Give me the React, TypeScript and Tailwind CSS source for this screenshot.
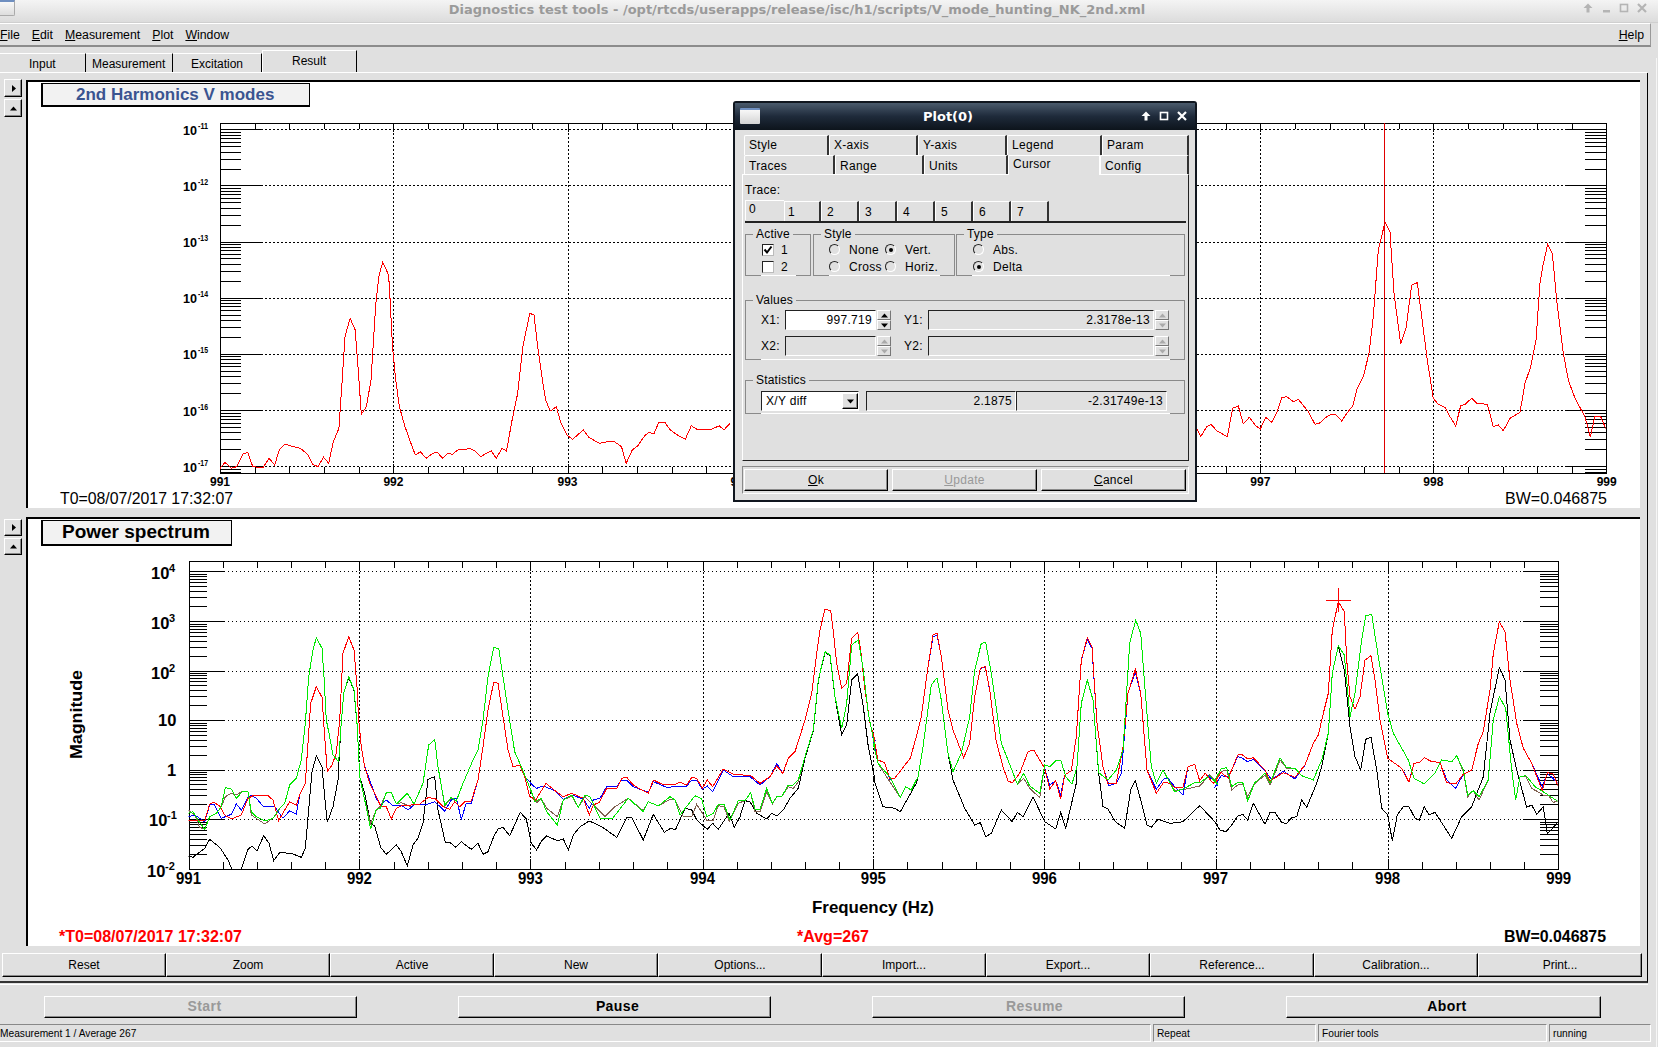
import React from "react";

const RED_A = "0,602 50,602 65,552 78,547 95,558 110,585 130,597 160,585 180,535 195,527 240,527 255,540 272,602 290,570 305,545 325,555 335,525 352,490 358,400 368,250 385,200 402,232 410,350 418,455 432,435 445,400 455,300 465,100 482,50 498,90 507,200 512,300 520,380 530,440 545,490 565,530 578,558 595,560 610,597 625,565 645,555 670,555 695,552 720,533 740,535 765,560 785,568 800,545 815,560 830,545 850,543 870,480 885,380 900,270 917,187 930,190 945,290 960,390 975,440 995,435 1010,470 1025,530 1035,535";
const BLUE_A = "0,590 20,585 50,605 65,555 78,552 100,595 130,583 145,552 160,570 180,532 190,525 205,535 225,558 260,560 285,595 305,572 325,582 335,525 352,490 358,400 368,250 385,200 402,232 410,350 418,455 432,435 445,400 455,300 465,100 482,50 498,90 507,200 512,300 520,380 530,440 545,480 565,535 578,555 595,540 612,555 640,555 660,570 680,553 700,553 720,552 740,545 770,573 790,540 805,535 820,597 835,550 850,550 870,480 885,380 900,270 917,187 930,190 945,290 960,390 975,440 995,435 1010,470 1035,495";
const GREEN_A = "0,580 15,575 30,600 50,628 65,590 85,580 100,560 112,503 130,507 145,535 165,513 180,515 190,575 205,590 230,603 255,595 275,565 290,550 305,495 325,475 340,420 352,310 362,170 375,90 385,53 402,85 408,170 415,300 423,340 435,405 452,425 458,330 467,220 482,170 498,210 508,320 515,470 530,540 548,627 565,568 578,565 595,518 610,518 625,552 658,520 678,552 705,490 722,375 740,358 750,440 770,555 790,532 805,543 825,490 855,420 870,390 885,300 900,170 917,83 932,85 945,170 960,270 980,395 1000,440 1020,490 1035,525";
const BROWN_A = "0,570 20,585 35,622 50,628 65,590 85,580 100,560 112,530 130,520 145,525 165,513 180,515 190,585 230,612 260,590 275,565 290,550 305,495 325,475 340,420 352,310 362,170 375,90 385,53 402,85 408,170 415,300 423,340 435,405 452,425 458,330 467,220 482,170 498,210 508,320 515,470 530,540 548,610 565,570 578,558 595,518 610,518 625,552 640,548 670,560 678,552 705,490 722,375 740,358 750,440 770,558 790,535 805,543 825,490 855,420 870,390 885,300 900,170 917,83 932,85 945,170 960,270 980,395 1000,440 1020,490 1035,525";
const BLACK_A = "0,708 15,712 50,685 65,658 95,682 120,720 132,748 145,775 160,748 180,688 192,678 207,693 227,647 243,670 257,722 275,698 310,700 340,712 352,685 372,455 385,408 402,440 410,530 418,607 435,560 450,480 458,330 467,220 482,172 498,212 508,320 515,470 530,520 548,610 560,618 578,682 595,703 625,675 640,695 658,738 675,675 690,655 705,610 720,478 740,470 750,570 772,667 785,667 803,682 820,665 850,688 870,670 885,703 900,695 917,650 930,627 945,622 965,647 997,577 1015,597 1030,670";

const RED_B = "6,590 15,603 48,550 75,572 100,590 125,580 160,595 178,645 190,615 208,607 230,565 260,565 275,535 290,532 310,555 335,570 355,580 370,540 395,552 430,555 450,547 470,555 485,532 500,535 517,565 532,540 548,560 580,507 610,522 640,525 660,525 690,550 720,530 740,497 758,520 775,475 795,455 825,360 845,280 860,160 870,90 885,27 902,33 910,95 920,190 935,265 950,250 965,115 983,97 992,150 1005,270 1020,370 1035,420";
const BLUE_B = "0,550 20,565 40,558 75,572 100,598 125,585 160,597 178,625 190,600 210,595 230,560 260,560 275,540 290,540 310,560 355,577 370,545 410,562 470,558 485,540 500,540 517,568 532,558 548,575 580,510 610,530 660,530 690,555 720,530 740,490 758,520 775,475 795,455 825,360 845,280 860,160 870,90 885,27 902,33 910,95 920,190 935,265 950,250 965,115 983,97 992,150 1005,270 1020,370 1035,420";
const GREEN_B = "0,565 15,605 33,595 50,635 82,675 100,600 125,585 145,622 165,585 180,590 210,655 248,655 275,620 295,595 340,635 355,605 385,618 420,590 435,600 450,645 495,587 515,597 530,650 550,640 565,613 582,613 600,660 625,602 645,602 662,578 675,627 690,627 710,565 727,610 740,590 755,590 775,555 790,555 805,540 825,470 850,390 865,240 885,155 900,165 915,290 935,385 950,310 965,135 985,120 1000,210 1015,340 1035,440";
const BROWN_B = "0,570 20,608 33,595 50,625 82,650 100,600 125,588 145,622 165,590 195,620 225,650 255,620 295,595 340,632 355,605 385,618 420,598 435,600 460,650 485,650 500,613 530,660 550,660 565,617 582,620 598,665 625,610 645,602 662,578 675,635 690,635 710,575 727,612 740,590 755,590 775,560 790,565 805,545 825,470 850,390 865,240 885,155 900,165 915,290 935,385 950,310 965,135 985,120 1000,210 1015,340 1035,440";
const BLACK_B = "0,725 20,750 33,725 50,708 82,722 100,717 115,750 130,705 150,680 178,663 215,680 260,712 290,652 305,652 340,720 370,643 403,697 420,686 437,688 465,625 485,630 500,660 532,688 548,670 565,688 597,640 613,682 630,650 645,602 660,605 680,640 710,657 725,640 740,648 760,630 780,595 805,565 825,475 850,392 865,242 885,157 900,167 915,292 935,405 950,375 965,240 983,222 1000,320 1015,440 1035,540";

const RED_C = "0,370 15,450 35,458 50,505 65,505 100,460 112,445 130,380 145,320 165,170 180,75 192,70 205,140 225,300 240,360 272,443 290,400 305,260 322,175 337,170 350,240 370,395 390,470 405,513 418,518 440,490 465,425 482,420 500,450 515,475 530,537 548,512 563,567 575,495 595,482 610,380 625,150 643,83 657,110 672,340 690,470 705,522 730,520 750,410 765,250 787,178 803,250 822,480 850,550 872,517 890,520 905,532 930,532 945,470 965,463 980,512 997,490 1020,520 1035,510";
const BLUE_C = "0,385 15,450 35,458 50,508 65,505 100,460 112,445 130,380 145,320 165,170 180,80 192,75 205,140 225,300 240,360 272,443 290,400 305,260 322,175 337,172 350,240 370,395 390,470 405,513 418,518 440,490 465,425 482,420 500,450 515,475 530,525 548,512 563,555 575,495 595,482 610,380 625,150 643,88 657,115 672,340 690,470 708,527 730,520 745,490 765,250 787,185 803,250 822,480 850,538 872,507 885,505 905,530 930,555 945,470 965,463 980,512 997,490 1020,510 1035,525";
const GREEN_C = "0,400 15,460 50,500 82,562 98,530 115,540 135,500 150,410 175,225 192,203 205,270 225,430 240,485 265,430 290,320 305,180 325,100 338,97 355,190 385,400 405,450 433,522 452,490 470,528 500,550 515,465 530,470 548,452 563,450 578,500 597,522 612,470 625,280 643,210 660,270 677,488 705,510 730,480 750,420 770,100 788,30 803,70 825,350 835,470 850,520 870,480 905,545 930,537 965,518 980,518 1010,497 1035,525";
const BROWN_C = "0,400 15,460 50,515 82,562 98,530 115,540 135,500 150,410 175,225 192,203 205,270 225,430 240,485 265,430 290,320 305,180 325,100 338,97 355,190 385,400 405,450 433,522 452,505 470,535 500,563 515,465 530,470 548,452 563,450 578,500 597,522 612,470 625,280 643,210 660,270 677,488 705,510 730,480 750,420 770,100 788,30 803,70 825,350 835,470 850,520 870,480 905,542 940,537 980,528 1010,495 1035,520";
const BLACK_C = "0,500 30,590 65,595 82,605 130,520 135,500 150,410 175,225 192,203 205,270 225,430 240,510 275,595 305,645 322,638 338,680 355,670 385,600 418,635 433,607 450,620 480,560 515,635 548,657 563,607 578,655 610,520 612,470 625,280 643,210 660,270 677,490 690,590 705,597 727,635 755,655 773,540 787,512 803,570 822,645 835,652 855,628 892,640 930,635 980,587 1035,645";

const RED_D = "0,605 18,577 40,595 68,525 80,523 98,537 115,533 150,570 165,603 205,578 240,592 270,555 295,490 310,465 325,400 340,340 352,150 370,65 388,95 395,240 405,350 420,388 435,350 450,240 468,227 480,300 495,420 518,535 560,565 582,607 597,550 612,548 628,533 650,545 675,547 695,608 722,612 745,583 770,570 790,490 805,455 825,330 835,220 853,125 870,155 885,300 905,430 925,505 950,550 982,632 997,578 1015,582 1030,620";
const BLUE_D = "0,620 18,587 40,590 68,530 80,533 98,545 115,538 150,572 170,600 205,573 240,597 270,555 295,490 310,465 325,400 340,340 352,150 370,65 388,95 395,240 405,350 420,388 435,350 450,240 468,227 480,300 495,420 518,535 560,565 582,605 597,550 612,548 628,533 650,545 675,547 695,600 722,625 745,583 770,570 790,490 805,455 825,330 835,220 853,125 870,155 885,300 905,430 925,505 950,550 982,620 997,580 1030,610";
const GREEN_D = "0,600 18,567 35,563 50,620 68,607 83,607 98,663 118,610 150,580 165,610 195,533 215,563 240,565 260,587 295,600 320,540 340,460 352,280 370,197 388,225 405,410 420,340 440,180 452,107 470,103 490,230 518,400 535,460 580,540 597,595 628,612 660,580 680,540 710,545 725,527 745,570 758,645 775,632 792,650 820,600 835,420 853,350 872,385 890,570 902,660 915,590 933,587 960,620 1000,645 1030,665";
const BROWN_D = "0,600 18,575 35,570 50,630 68,615 83,612 98,650 118,612 150,585 165,615 195,540 215,565 240,565 260,587 295,600 320,540 340,460 352,280 370,197 388,225 405,410 420,340 440,180 452,107 470,103 490,230 518,400 535,460 580,540 597,595 628,612 660,580 680,540 710,545 725,527 745,575 758,650 775,632 792,660 820,600 835,420 853,350 872,385 890,570 902,660 915,590 933,590 950,625 985,645 1000,645 1015,668 1030,660";
const BLACK_D = "0,728 15,750 33,755 50,735 68,708 83,703 98,720 115,670 150,733 165,697 180,697 200,728 215,730 230,713 245,710 260,660 275,682 305,610 320,560 340,460 352,280 370,197 388,270 405,440 420,530 437,570 452,478 468,472 485,570 500,685 518,705 532,782 547,705 565,680 582,680 600,715 613,720 628,680 642,705 660,697 710,775 740,710 770,680 805,590 825,400 853,262 870,300 885,480 905,570 935,682 950,675 965,703 985,680 997,762 1030,725";

const TOP_L = "473,565 483,547 497,565 508,560 522,522 532,517 543,560 565,563 578,535 590,555 600,510 612,492 630,500 645,505 660,522 672,553 683,560 695,532 706,550 716,485 728,445 735,300 741,170 752,115 763,150 770,280 776,403 787,380 797,300 806,100";
const TOP_PEAK = "808,300 814,276 822,262 830,270 835,276 838,300";
const TOP_M = "838,60 843,200 850,300 858,380 870,440 880,480 892,525 903,515 915,535 930,520 940,517 950,535 962,520 972,523 985,508 997,510 1008,505 1020,512 1032,530 1055,512 1066,535 1078,505 1088,513 1100,420 1112,340 1123,200 1138,100 1147,105 1155,200 1165,300 1172,360 1182,393 1195,380 1205,430 1218,465 1230,478 1253,450 1265,472 1287,490 1305,485 1320,485 1335,500 1345,550 1358,510 1370,497 1385,467 1393,458 1405,460 1415,427 1428,427 1440,450 1455,465 1472,478 1485,437 1497,448 1512,448 1525,450 1545,437 1555,450 1568,430";
const TOP_R = "22,1288 32,1310 50,1280 63,1273 80,1292 112,1310 128,1225 145,1218 160,1272 178,1252 195,1275 211,1287 227,1252 245,1267 262,1235 275,1193 290,1190 310,1205 325,1198 355,1235 375,1273 388,1270 410,1250 425,1243 438,1245 455,1263 470,1240 488,1218 500,1170 520,1130 537,1060 550,950 565,750 585,667 600,697 612,880 632,1033 648,985 665,855 682,848 695,950 712,1080 730,1195 745,1213 765,1222 780,1250 797,1278 812,1217 825,1213 845,1195 860,1210 892,1213 910,1280 925,1275 940,1292 960,1255 990,1237 1005,1150 1022,1100 1038,1020 1050,850 1058,800 1073,733 1087,760 1100,900 1120,1060 1135,1140 1155,1195 1185,1250 1201,1310 1215,1248 1232,1250 1250,1293";

const conv = (s: string, x0: number, y0: number, sx: number, sy: number) =>
  s.split(" ").map((p) => {
    const [x, y] = p.split(",").map(Number);
    return `${(x0 + x / sx).toFixed(1)},${(y0 + y / sy).toFixed(1)}`;
  }).join(" ");

const join4 = (a: string, b: string, c: string, d: string) =>
  [conv(a, 188, 620, 3, 3), conv(b, 530, 600, 3, 3), conv(c, 873, 610, 3, 3), conv(d, 1215, 580, 3, 3)].join(" ");

const topTrace = [
  conv(TOP_L, 0, 280, 2.148, 3),
  conv(TOP_PEAK, 0, 0, 2.148, 1),
  conv(TOP_M, 0, 280, 2.148, 3),
].join(" ");
const topTraceRight = conv(TOP_R, 1190, 0, 3, 3);

type PlotProps = {
  id: string; l: number; r: number; t: number; b: number;
  xAt: number[]; decades: number[]; majLen: number; minLen: number; xTick: number; children?: React.ReactNode;
};

function Axes({ id, l, r, t, b, xAt, decades, majLen, minLen, xTick, children }: PlotProps) {
  const dec = Math.abs(decades[1] - decades[0]);
  const minors: number[] = [];
  for (const d of decades) {
    for (const m of [2, 3, 4, 5, 6, 7, 8, 9]) {
      const y = d - dec * Math.log10(m);
      if (y > t + 1) minors.push(y);
    }
    for (const m of [2, 3, 4, 5, 6, 7, 8, 9]) {
      const y = d + dec - dec * Math.log10(m);
      if (d === decades[decades.length - 1] && y < b) minors.push(y);
    }
  }
  const step = (xAt[1] - xAt[0]) / 5;
  const xMinor: number[] = [];
  for (let i = 0; i < xAt.length - 1; i++) for (let k = 1; k < 5; k++) xMinor.push(xAt[i] + step * k);
  const H = (y: number, x1: number, x2: number, key: string, dash?: string) => (
    <line key={key} x1={x1} x2={x2} y1={Math.round(y) + 0.5} y2={Math.round(y) + 0.5} stroke="#000" strokeDasharray={dash} shapeRendering="crispEdges" />
  );
  const V = (x: number, y1: number, y2: number, key: string, dash?: string) => (
    <line key={key} y1={y1} y2={y2} x1={Math.round(x) + 0.5} x2={Math.round(x) + 0.5} stroke="#000" strokeDasharray={dash} shapeRendering="crispEdges" />
  );
  return (
    <g>
      <clipPath id={id}><rect x={l} y={t} width={r - l} height={b - t} /></clipPath>
      {decades.map((y, i) => (
        <g key={i}>
          {H(y, l + majLen, r - majLen, "g" + i, "1.5 2.5")}
          {H(y, l, l + majLen, "a" + i)}
          {H(y, r - majLen, r, "c" + i)}
        </g>
      ))}
      {minors.map((y, i) => (
        <g key={i}>
          {H(y, l, l + minLen, "a" + i)}
          {H(y, r - minLen, r, "c" + i)}
        </g>
      ))}
      {xAt.slice(1, -1).map((x, i) => (
        <g key={i}>
          {V(x, t + xTick, b - xTick, "g" + i, "1.5 2.5")}
          {V(x, t, t + xTick + 3, "a" + i)}
          {V(x, b - xTick - 3, b, "c" + i)}
        </g>
      ))}
      {xMinor.map((x, i) => (
        <g key={i}>
          {V(x, t, t + xTick, "a" + i)}
          {V(x, b - xTick, b, "c" + i)}
        </g>
      ))}
      <rect x={l + 0.5} y={t + 0.5} width={r - l} height={b - t} fill="none" stroke="#000" shapeRendering="crispEdges" />
      <g clipPath={`url(#${id})`}>{children}</g>
    </g>
  );
}

const Trace = ({ pts, c }: { pts: string; c: string }) => (
  <polyline points={pts} fill="none" stroke={c} strokeWidth={1} shapeRendering="crispEdges" />
);

function TopPlot() {
  const xAt = [220, 393.4, 567.5, 740.6, 913.9, 1087, 1260.3, 1433.3, 1606.7];
  const dec = [129.3, 185.4, 241.5, 297.6, 353.8, 410, 466.2];
  const exps = ["-11", "-12", "-13", "-14", "-15", "-16", "-17"];
  return (
    <svg width="1612" height="426" viewBox="28 82 1612 426" className="block font-['Liberation_Sans',sans-serif]">
      <Axes id="c1" l={220} r={1605.5} t={123} b={473} xAt={xAt} decades={dec} majLen={41} minLen={21} xTick={6}>
        <Trace pts={topTrace} c="#ff0000" />
        <Trace pts={topTraceRight} c="#ff0000" />
        <line x1="1384.5" x2="1384.5" y1="123" y2="473" stroke="#e00000" shapeRendering="crispEdges" />
      </Axes>
      {dec.map((y, i) => (
        <g key={i} fontWeight="700">
          <text x="183" y={y + 5.5} fontSize="12" textLength="14" lengthAdjust="spacingAndGlyphs">10</text>
          <text x="198" y={y - 0.5} fontSize="8.5" textLength="10" lengthAdjust="spacingAndGlyphs">{exps[i]}</text>
        </g>
      ))}
      {["991", "992", "993", "994", "995", "996", "997", "998", "999"].map((s, i) => (
        <text key={s} x={xAt[i]} y="486" fontSize="12" fontWeight="700" textAnchor="middle">{s}</text>
      ))}
      <text x="60" y="504" fontSize="16" textLength="173" lengthAdjust="spacingAndGlyphs">T0=08/07/2017 17:32:07</text>
      <text x="1505" y="504" fontSize="16" textLength="102" lengthAdjust="spacingAndGlyphs">BW=0.046875</text>
    </svg>
  );
}

function BottomPlot() {
  const xAt = [188.5, 359.4, 530.4, 702.5, 873.3, 1044.4, 1215.5, 1387.6, 1558.7];
  const dec = [571.3, 621.3, 671.3, 720.3, 770.3, 819.3];
  const red = join4(RED_A, RED_B, RED_C, RED_D);
  const blue = join4(BLUE_A, BLUE_B, BLUE_C, BLUE_D);
  const green = join4(GREEN_A, GREEN_B, GREEN_C, GREEN_D);
  const brown = join4(BROWN_A, BROWN_B, BROWN_C, BROWN_D);
  const black = join4(BLACK_A, BLACK_B, BLACK_C, BLACK_D);
  const yl: [string, string, number, number, number, number][] = [
    ["10", "4", 151, 579, 169, 572],
    ["10", "3", 151, 629, 169, 622],
    ["10", "2", 151, 679, 169, 672],
    ["10", "", 158, 726, 0, 0],
    ["1", "", 167, 776, 0, 0],
    ["10", "-1", 149, 826, 167, 819],
    ["10", "-2", 147, 877, 165, 870],
  ];
  return (
    <svg width="1612" height="426" viewBox="28 520 1612 426" className="block font-['Liberation_Sans',sans-serif]">
      <Axes id="c2" l={188.5} r={1557.5} t={561} b={869} xAt={xAt} decades={dec} majLen={35} minLen={18} xTick={7}>
        <Trace pts={black} c="#000000" />
        <Trace pts={brown} c="#806050" />
        <Trace pts={blue} c="#0000ff" />
        <Trace pts={red} c="#ff0000" />
        <Trace pts={green} c="#00e800" />
      </Axes>
      <line x1="1326" x2="1351" y1="600.5" y2="600.5" stroke="#ff0000" shapeRendering="crispEdges" />
      <line x1="1338.5" x2="1338.5" y1="588" y2="612" stroke="#ff0000" shapeRendering="crispEdges" />
      {yl.map(([a, e, x, y, ex, ey], i) => (
        <g key={i} fontWeight="700">
          <text x={x} y={y} fontSize="16.5">{a}</text>
          {e ? <text x={ex} y={ey} fontSize="11">{e}</text> : null}
        </g>
      ))}
      {["991", "992", "993", "994", "995", "996", "997", "998", "999"].map((s, i) => (
        <text key={s} x={xAt[i]} y="884" fontSize="16.5" fontWeight="700" textAnchor="middle" textLength="25" lengthAdjust="spacingAndGlyphs">{s}</text>
      ))}
      <text x="82" y="759" fontSize="16" fontWeight="700" textLength="89" lengthAdjust="spacingAndGlyphs" transform="rotate(-90 82 759)" >Magnitude</text>
      <text x="812" y="913" fontSize="16.5" fontWeight="700" textLength="122" lengthAdjust="spacingAndGlyphs">Frequency (Hz)</text>
      <text x="59" y="942" fontSize="16" fontWeight="700" fill="#ff0000" textLength="183" lengthAdjust="spacingAndGlyphs">*T0=08/07/2017 17:32:07</text>
      <text x="797" y="942" fontSize="16" fontWeight="700" fill="#ff0000" textLength="72" lengthAdjust="spacingAndGlyphs">*Avg=267</text>
      <text x="1504" y="942" fontSize="16" fontWeight="700" textLength="102" lengthAdjust="spacingAndGlyphs">BW=0.046875</text>
    </svg>
  );
}

const Tri = ({ dir, c = "#000" }: { dir: "u" | "d" | "r"; c?: string }) => (
  <svg width="7" height="7" viewBox="0 0 7 7" className="block">
    {dir === "u" && <polygon points="3.5,1.5 7,5.5 0,5.5" fill={c} />}
    {dir === "d" && <polygon points="0,1.5 7,1.5 3.5,5.5" fill={c} />}
    {dir === "r" && <polygon points="2,0 6,3.5 2,7" fill={c} />}
  </svg>
);

const SideBtn = ({ dir, h }: { dir: "u" | "r"; h: string }) => (
  <div className={`w-[18px] ${h} flex items-center justify-center bg-[#e0e0e0] border border-t-white border-l-white border-r-black border-b-black shadow-[inset_-1px_-1px_0_#888]`}>
    <Tri dir={dir} />
  </div>
);

const Tab = ({ w, active, children, cls = "" }: { w: string; active?: boolean; children: React.ReactNode; cls?: string }) => (
  <div className={`${w} ${active ? "h-[22px] border-t border-l border-r border-t-white border-l-white border-r-black bg-[#e0e0e0] pb-[1px]" : "h-[19px] pt-[1px] border-t border-r border-t-white border-r-black"} flex items-center ${cls}`}>
    {children}
  </div>
);

const Raised = ({ className, children }: { className: string; children: React.ReactNode }) => (
  <div className={`${className} flex items-center justify-center bg-[#e0e0e0] border border-t-white border-l-white border-r-black border-b-black shadow-[inset_-1px_-1px_0_#8a8a8a]`}>
    {children}
  </div>
);

const Radio = ({ on }: { on?: boolean }) => (
  <span className="w-[11px] h-[11px] shrink-0 rounded-full flex items-center justify-center bg-[#e0e0e0] border border-t-[#222] border-l-[#222] border-r-white border-b-white">
    {on && <span className="w-[4px] h-[4px] rounded-full bg-black" />}
  </span>
);

const Check = ({ on }: { on?: boolean }) => (
  <span className="w-[12px] h-[12px] shrink-0 flex items-center justify-center bg-white border border-t-[#222] border-l-[#222] border-r-[#bbb] border-b-[#bbb]">
    {on && (
      <svg width="10" height="10" viewBox="0 0 10 10" className="block">
        <path d="M1.5 4.5 L4 7.5 L8.5 1.5" fill="none" stroke="#000" strokeWidth="2" />
      </svg>
    )}
  </span>
);

const Group = ({ w, h, label, cls = "", children }: { w: string; h: string; label: string; cls?: string; children: React.ReactNode }) => (
  <div className={`relative ${w} ${h} border border-t-[#8a8a8a] border-l-[#8a8a8a] border-r-[#8a8a8a] border-b-white ${cls}`}>
    <span className="absolute -top-[9px] left-[7px] px-[3px] bg-[#e0e0e0] text-[12px] leading-[16px] tracking-[0.2px]">{label}</span>
    <span className="absolute -bottom-px -left-px w-[16px] h-px bg-[#8a8a8a]" />
    <span className="absolute -bottom-px -right-px w-[15px] h-px bg-[#8a8a8a]" />
    {children}
  </div>
);

const Field = ({ w, white, children }: { w: string; white?: boolean; children?: React.ReactNode }) => (
  <div className={`${w} h-[20px] pr-[3px] flex items-center justify-end text-[12px] tracking-[0.3px] border border-t-[#222] border-l-[#222] border-r-white border-b-white ${white ? "bg-white" : "bg-[#e0e0e0]"}`}>
    {children}
  </div>
);

const Spin = ({ off }: { off?: boolean }) => {
  const c = off ? "#aaa" : "#000";
  const s = "w-[14px] h-[10px] flex items-center justify-center bg-[#e0e0e0] border border-t-white border-l-white border-r-[#777] border-b-[#777]";
  return (
    <div className="flex flex-col">
      <div className={s}><Tri dir="u" c={c} /></div>
      <div className={s}><Tri dir="d" c={c} /></div>
    </div>
  );
};

const DTab = ({ w, active, shift, children }: { w: string; active?: boolean; shift?: string; children: React.ReactNode }) => (
  <div className={`${w} pl-[4px] flex items-center text-[12px] tracking-[0.3px] rounded-tl-[2px] ${shift ?? ""} ${active ? "border-t border-l border-r border-t-white border-l-white border-r-white bg-[#e0e0e0] pb-[3px] relative -mb-px" : "border-t border-l border-r-2 border-t-white border-l-white border-r-[#333]"}`}>
    {children}
  </div>
);

const TTab = ({ w, active, pl = "pl-[5px]", children }: { w: string; active?: boolean; pl?: string; children: React.ReactNode }) => (
  <div className={`${w} h-[20px] flex items-center ${pl} text-[12px] border-t border-l border-t-white border-l-white ${active ? "pb-[3px]" : "border-r-2 border-r-[#333] mt-px"}`}>
    {children}
  </div>
);

const Arrow = ({ c, x }: { c: string; x: number }) => (
  <path transform={`translate(${x} 0)`} d="M5 1.5 L9.5 6 L6.5 6 L6.5 10.5 L3.5 10.5 L3.5 6 L0.5 6 Z" fill={c} />
);
const Sq = ({ c, x }: { c: string; x: number }) => (
  <rect x={x + 1.5} y="2.5" width="7" height="7" fill="none" stroke={c} strokeWidth="1.6" />
);
const Ex = ({ c, x }: { c: string; x: number }) => (
  <path d={`M${x + 1} 2 L${x + 9} 10 M${x + 9} 2 L${x + 1} 10`} stroke={c} strokeWidth="2.2" />
);

const WinIcons = ({ c, min }: { c: string; min?: boolean }) => (
  <svg width={min ? 64 : 46} height="12" viewBox={min ? "0 0 64 12" : "0 0 46 12"} className="block">
    <Arrow c={c} x={0} />
    {min ? <rect x="20" y="8" width="7" height="2.5" fill={c} /> : null}
    <Sq c={c} x={min ? 36 : 18} />
    <Ex c={c} x={min ? 54 : 36} />
  </svg>
);

const Status = ({ w, children }: { w: string; children?: React.ReactNode }) => (
  <div className={`${w} h-[18px] pl-[3px] pt-px flex items-center text-[10.2px] border border-t-[#888] border-l-[#888] border-r-white border-b-white`}>{children}</div>
);

function Dialog() {
  return (
    <div className="absolute left-[733px] top-[101px] w-[464px] h-[401px] border-2 border-[#10161f] rounded-t-[3px] bg-[#e0e0e0] flex flex-col">
      <div className="relative h-[27px] pr-[34px] flex items-center justify-center bg-linear-to-b from-[#4a5a6c] via-[#1e2a3a] to-[#0d141c]">
        <span className="absolute left-[5px] top-[5px] w-[20px] h-[16px] rounded-[1px] bg-linear-to-b from-[#f8f8f8] to-[#d4d4d4] border-t-2 border-t-[#6f8fc0]" />
        <span className="text-white text-[13px] font-bold font-['DejaVu_Sans',sans-serif]">Plot(0)</span>
        <div className="absolute left-[406px] top-[7px]"><WinIcons c="#ffffff" /></div>
      </div>
      <div className="pl-[7px] pt-[5px] flex flex-col">
        <div className="flex h-[20px] pl-[2px]">
          <DTab w="w-[85px]" shift="pb-[2px]">Style</DTab>
          <DTab w="w-[89px]" shift="pb-[2px]">X-axis</DTab>
          <DTab w="w-[89px]" shift="pb-[2px]">Y-axis</DTab>
          <DTab w="w-[95px]" shift="pb-[2px]">Legend</DTab>
          <DTab w="w-[87px]" shift="pb-[2px]">Param</DTab>
        </div>
        <div className="flex h-[19px] pl-[2px]">
          <DTab w="w-[91px]" shift="pt-[2px]">Traces</DTab>
          <DTab w="w-[89px]" shift="pt-[2px]">Range</DTab>
          <DTab w="w-[84px]" shift="pt-[2px]">Units</DTab>
          <DTab w="w-[92px]" active>Cursor</DTab>
          <DTab w="w-[89px]" shift="pt-[2px]">Config</DTab>
        </div>
        <div className="w-[447px] h-[287px] border border-t-white border-l-white border-r-[#222] border-b-[#222] px-[2px] pt-[7px] flex flex-col">
          <div className="text-[12px] leading-[16px] tracking-[0.3px]">Trace:</div>
          <div className="flex mt-[2px] border-b-2 border-b-[#222] w-[441px]">
            <TTab w="w-[39px]" active pl="pl-[3px]">0</TTab>
            <TTab w="w-[37px]" pl="pl-[3px]">1</TTab>
            <TTab w="w-[38px]">2</TTab>
            <TTab w="w-[38px]">3</TTab>
            <TTab w="w-[38px]">4</TTab>
            <TTab w="w-[38px]">5</TTab>
            <TTab w="w-[38px]">6</TTab>
            <TTab w="w-[38px]">7</TTab>
          </div>
          <div className="flex mt-[11px] text-[12px] tracking-[0.3px]">
            <Group w="w-[66px]" h="h-[42px]" label="Active" cls="mr-[2px]">
              <div className="pl-[16px] pt-[6px] flex flex-col">
                <div className="flex items-center gap-[7px] h-[17px]"><Check on /><span>1</span></div>
                <div className="flex items-center gap-[7px] h-[17px]"><Check /><span>2</span></div>
              </div>
            </Group>
            <Group w="w-[142px]" h="h-[42px]" label="Style" cls="mr-px">
              <div className="pl-[15px] pt-[6px] flex flex-col">
                <div className="flex items-center h-[17px]"><Radio /><span className="w-[45px] pl-[9px]">None</span><Radio on /><span className="pl-[9px]">Vert.</span></div>
                <div className="flex items-center h-[17px]"><Radio /><span className="w-[45px] pl-[9px]">Cross</span><Radio /><span className="pl-[9px]">Horiz.</span></div>
              </div>
            </Group>
            <Group w="w-[229px]" h="h-[42px]" label="Type">
              <div className="pl-[16px] pt-[6px] flex flex-col">
                <div className="flex items-center h-[17px]"><Radio /><span className="pl-[9px]">Abs.</span></div>
                <div className="flex items-center h-[17px]"><Radio on /><span className="pl-[9px]">Delta</span></div>
              </div>
            </Group>
          </div>
          <Group w="w-[440px]" h="h-[60px]" label="Values" cls="mt-[24px]">
            <div className="pl-[15px] pt-[9px] flex flex-col gap-[6px] text-[12px] tracking-[0.3px]">
              <div className="flex items-center">
                <span className="w-[24px]">X1:</span><Field w="w-[91px]" white>997.719</Field><span className="w-[1px]" /><Spin />
                <span className="w-[13px]" />
                <span className="w-[24px]">Y1:</span><Field w="w-[226px]">2.3178e-13</Field><span className="w-[1px]" /><Spin off />
              </div>
              <div className="flex items-center">
                <span className="w-[24px]">X2:</span><Field w="w-[91px]" /><span className="w-[1px]" /><Spin off />
                <span className="w-[13px]" />
                <span className="w-[24px]">Y2:</span><Field w="w-[226px]" /><span className="w-[1px]" /><Spin off />
              </div>
            </div>
          </Group>
          <Group w="w-[440px]" h="h-[34px]" label="Statistics" cls="mt-[20px]">
            <div className="pl-[15px] pt-[10px] flex text-[12px] tracking-[0.3px]">
              <div className="w-[98px] h-[20px] flex items-center bg-white border border-t-[#222] border-l-[#222] border-r-white border-b-white">
                <span className="w-[80px] pl-[4px]">X/Y diff</span>
                <Raised className="w-[16px] h-[16px]"><Tri dir="d" /></Raised>
              </div>
              <span className="w-[7px]" />
              <Field w="w-[150px]">2.1875</Field>
              <Field w="w-[151px]">-2.31749e-13</Field>
            </div>
          </Group>
        </div>
        <div className="w-[447px] h-[28px] mt-[5px] border border-t-[#8a8a8a] border-l-[#8a8a8a] border-r-white border-b-white flex items-center pl-[1px] text-[12px] tracking-[0.3px]">
          <Raised className="w-[144px] h-[22px]"><span><span className="underline">O</span>k</span></Raised>
          <span className="w-[4px]" />
          <Raised className="w-[145px] h-[22px]"><span className="text-[#999]"><span className="underline">U</span>pdate</span></Raised>
          <span className="w-[4px]" />
          <Raised className="w-[145px] h-[22px]"><span><span className="underline">C</span>ancel</span></Raised>
        </div>
      </div>
    </div>
  );
}

export default function App() {
  const btns = ["Reset", "Zoom", "Active", "New", "Options...", "Import...", "Export...", "Reference...", "Calibration...", "Print..."];
  return (
    <div className="relative w-[1658px] h-[1047px] overflow-hidden bg-[#e0e0e0] text-black flex flex-col font-['Liberation_Sans',sans-serif]">
      <div className="relative h-[23px] shrink-0 pr-[64px] pb-[3px] flex items-center justify-center bg-linear-to-b from-[#f4f4f4] to-[#dcdcdc] border-b border-b-[#cfcfcf]">
        <span className="absolute left-0 top-0 w-[15px] h-[16px] rounded-br-[2px] bg-linear-to-b from-[#f8f8f8] to-[#dddddd] border-t-2 border-t-[#6f8fc0] border-r border-b border-r-[#aaa] border-b-[#aaa]" />
        <span className="text-[#9a9a9a] text-[13px] font-bold font-['DejaVu_Sans',sans-serif] whitespace-nowrap">Diagnostics test tools - /opt/rtcds/userapps/release/isc/h1/scripts/V_mode_hunting_NK_2nd.xml</span>
        <div className="absolute left-[1583px] top-[2px]"><WinIcons c="#b4b4b4" min /></div>
      </div>
      <div className="w-[1651px] h-[24px] shrink-0 pt-px flex items-center justify-between border-t border-t-white border-r border-r-[#999] border-b-2 border-b-[#8c8c8c] text-[12.3px] pr-[6px]">
        <div className="flex gap-[12px]">
          <span><span className="underline">F</span>ile</span>
          <span><span className="underline">E</span>dit</span>
          <span><span className="underline">M</span>easurement</span>
          <span><span className="underline">P</span>lot</span>
          <span><span className="underline">W</span>indow</span>
        </div>
        <span><span className="underline">H</span>elp</span>
      </div>
      <div className="w-[1647px] h-[26px] shrink-0 flex items-end text-[12px] border-b border-b-white">
        <Tab w="w-[86px]" cls="pl-[29px]">Input</Tab>
        <Tab w="w-[87px]" cls="pl-[6px]">Measurement</Tab>
        <Tab w="w-[89px]" cls="pl-[18px]">Excitation</Tab>
        <Tab w="w-[95px]" active cls="pl-[29px]">Result</Tab>
      </div>
      <div className="w-[1648px] h-[910px] shrink-0 flex flex-col pt-[7px] border-r border-r-black border-b-2 border-b-[#333]">
        <div className="flex h-[428px]">
          <div className="w-[26px] pl-[4px] -mt-px flex flex-col gap-[2px]">
            <SideBtn dir="r" h="h-[18px]" />
            <SideBtn dir="u" h="h-[18px]" />
          </div>
          <div className="relative w-[1614px] h-[428px] bg-white border-t-2 border-l-2 border-t-black border-l-black">
            <TopPlot />
            <div className="absolute left-[13px] top-[1px] w-[269px] h-[24px] flex items-center bg-[#f2f2f2] border border-t-black border-l-2 border-l-black border-r-black border-b-2 border-b-black pl-[33px] text-[17px] font-bold text-[#3a5490] whitespace-nowrap">2nd Harmonics V modes</div>
          </div>
        </div>
        <div className="flex h-[428px] mt-[9px]">
          <div className="w-[26px] pl-[4px] mt-[2px] flex flex-col gap-[2px]">
            <SideBtn dir="r" h="h-[17px]" />
            <SideBtn dir="u" h="h-[17px]" />
          </div>
          <div className="relative w-[1614px] h-[429px] bg-white border-t-2 border-l-2 border-t-black border-l-black">
            <svg width="0" height="0" className="absolute" />
            <div className="mt-px"><BottomPlot /></div>
            <div className="absolute left-[13px] top-[1px] w-[191px] h-[26px] flex items-center bg-[#f2f2f2] border border-t-black border-l-2 border-l-black border-r-black border-b-2 border-b-black pl-[19px] text-[19px] font-bold whitespace-nowrap">Power spectrum</div>
          </div>
        </div>
        <div className="flex pl-[2px] mt-[8px] text-[12px]">
          {btns.map((b) => (
            <Raised key={b} className="w-[164px] h-[24px]">{b}</Raised>
          ))}
        </div>
      </div>
      <div className="w-[1648px] h-px shrink-0 mt-px bg-white" />
      <div className="flex shrink-0 mt-[11px] pl-[44px] text-[14px] font-bold tracking-[0.4px]">
        <Raised className="w-[313px] h-[22px]"><span className="text-[#999] pl-[8px] pb-[2px]">Start</span></Raised>
        <span className="w-[101px]" />
        <Raised className="w-[313px] h-[22px]"><span className="pl-[6px] pb-[2px]">Pause</span></Raised>
        <span className="w-[101px]" />
        <Raised className="w-[313px] h-[22px]"><span className="text-[#999] pl-[12px] pb-[2px]">Resume</span></Raised>
        <span className="w-[101px]" />
        <Raised className="w-[315px] h-[22px]"><span className="pl-[7px] pb-[2px]">Abort</span></Raised>
      </div>
      <div className="flex shrink-0 mt-[6px] gap-[2px]">
        <Status w="w-[1151px] !pl-0 border-l-0">Measurement 1 / Average 267</Status>
        <Status w="w-[163px]">Repeat</Status>
        <Status w="w-[229px]">Fourier tools</Status>
        <Status w="w-[102px]">running</Status>
      </div>
      <div className="absolute right-[1px] top-[58px] w-[1px] h-[989px] bg-[#f6f6f6]" />
      <Dialog />
    </div>
  );
}
